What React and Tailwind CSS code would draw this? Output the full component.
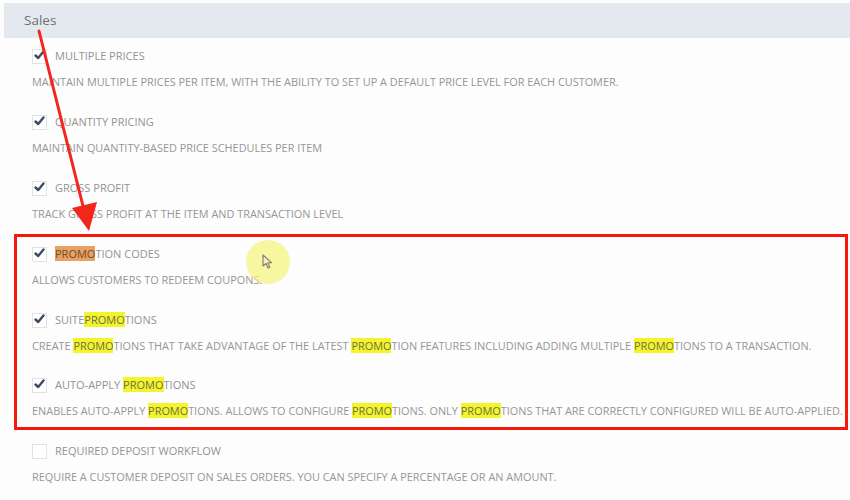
import React from 'react';

const HL = ({ children, orange }) => (
  <span className={orange ? 'bg-[#e8a162] text-[#6e4c2c]' : 'bg-[#f3f52a] text-[#6f6f4a]'}>{children}</span>
);

function CheckBox({ checked }) {
  return (
    <span className="flex h-[15px] w-[15px] shrink-0 items-center justify-center border border-[#e2e2e2] bg-white">
      {checked && (
        <svg width="11" height="10" viewBox="0 0 11 10" className="-mt-[3px]">
          <path d="M1.5 5.5 L4.2 8 L9.5 1.5" fill="none" stroke="#3d4b66" strokeWidth="2.4" strokeLinecap="round" strokeLinejoin="round" />
        </svg>
      )}
    </span>
  );
}

function Row({ checked = true, title, desc, className = '' }) {
  return (
    <div className={className}>
      <div className="flex h-[20px] items-center">
        <CheckBox checked={checked} />
        <span className="ml-[8px] text-[11px] uppercase text-[#939393]">{title}</span>
      </div>
      <div className="mt-[6px] h-[20px] text-[10.9px] leading-[20px] uppercase text-[#969696] whitespace-nowrap">{desc}</div>
    </div>
  );
}

export default function App() {
  return (
    <div className="relative h-[500px] w-[850px] overflow-hidden bg-[#fdfdfd]" style={{ fontFamily: '"Open Sans", "Liberation Sans", sans-serif' }}>
      {/* section header */}
      <div className="ml-[4px] mt-[3px] flex h-[35px] items-center bg-[#e4e8ef] pl-[20px] text-[13.5px] text-[#707070]">
        Sales
      </div>

      <div className="pt-[8px]">
        <div className="pl-[32px]">
          <Row title="Multiple Prices" desc="Maintain multiple prices per item, with the ability to set up a default price level for each customer." />
          <Row className="mt-[20px]" title="Quantity Pricing" desc="Maintain quantity-based price schedules per item" />
          <Row className="mt-[20px]" title="Gross Profit" desc="Track gross profit at the item and transaction level" />
        </div>

        {/* highlighted group */}
        <div className="ml-[14px] mr-[2px] mt-[10px] border-[3px] border-[#f5190d] pb-[6px] pl-[15px] pt-[7px]">
          <Row
            title={<><HL orange>PROMO</HL>TION CODES</>}
            desc="Allows customers to redeem coupons."
          />
          <Row
            className="mt-[20px]"
            title={<>SUITE<HL>PROMO</HL>TIONS</>}
            desc={<>CREATE <HL>PROMO</HL>TIONS THAT TAKE ADVANTAGE OF THE LATEST <HL>PROMO</HL>TION FEATURES INCLUDING ADDING MULTIPLE <HL>PROMO</HL>TIONS TO A TRANSACTION.</>}
          />
          <Row
            className="mt-[19px]"
            title={<>AUTO-APPLY <HL>PROMO</HL>TIONS</>}
            desc={<>ENABLES AUTO-APPLY <HL>PROMO</HL>TIONS. ALLOWS TO CONFIGURE <HL>PROMO</HL>TIONS. ONLY <HL>PROMO</HL>TIONS THAT ARE CORRECTLY CONFIGURED WILL BE AUTO-APPLIED.</>}
          />
        </div>

        <div className="mt-[11px] pl-[32px]">
          <Row checked={false} title="Required Deposit Workflow" desc="Require a customer deposit on sales orders. You can specify a percentage or an amount." />
        </div>
      </div>

      {/* cursor highlight */}
      <div className="absolute left-[246px] top-[240px] h-[44px] w-[44px] rounded-full bg-[#f4f47a]/70" />
      <svg className="absolute left-[262px] top-[254px]" width="12" height="16" viewBox="0 0 12 16">
        <path d="M1 1 L1 12 L4 9.5 L6 14 L7.8 13.2 L5.8 8.8 L9.5 8.6 Z" fill="#f0efc8" stroke="#8a8468" strokeWidth="1.2" strokeLinejoin="round" />
      </svg>

      {/* red arrow annotation */}
      <svg className="pointer-events-none absolute left-0 top-0" width="850" height="500">
        <line x1="39" y1="31" x2="84" y2="210" stroke="#f2261b" strokeWidth="3" strokeLinecap="round" />
        <polygon points="89,231 72,208 97,202" fill="#f2261b" />
      </svg>
    </div>
  );
}
